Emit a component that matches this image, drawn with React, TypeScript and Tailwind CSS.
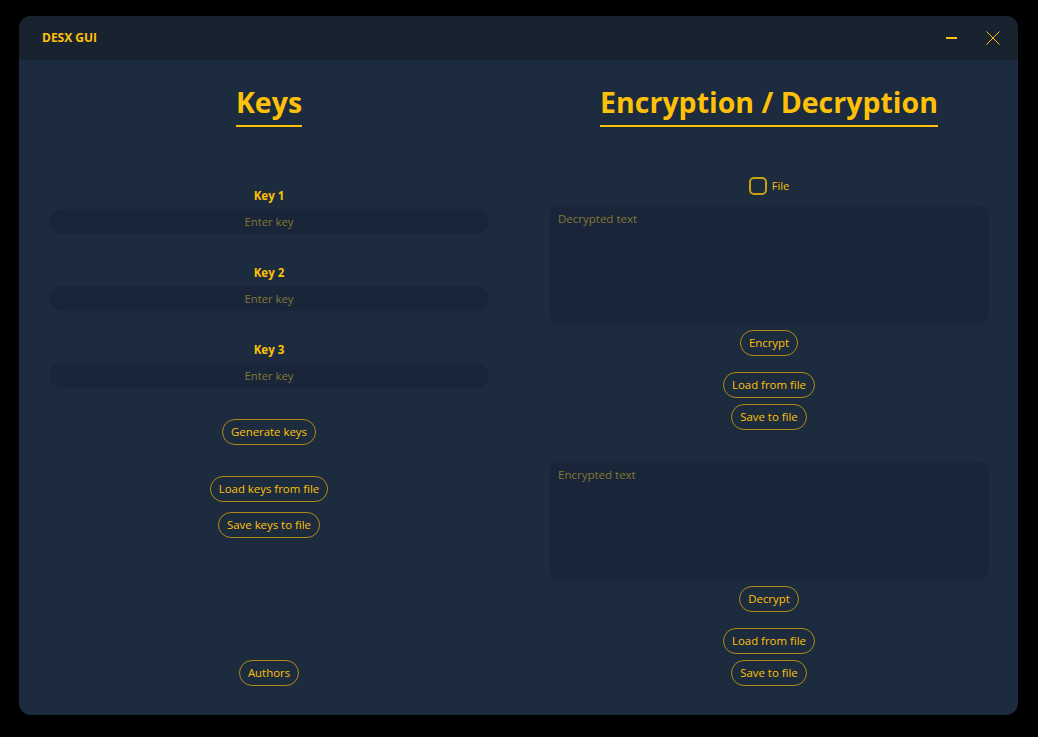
import React from "react";

const Btn = ({ children, className = "" }: { children: React.ReactNode; className?: string }) => (
  <button
    className={`h-[26px] px-[8px] rounded-full border border-[#b08c17] text-[#ffc107] text-[11.4px] leading-none flex items-center justify-center bg-transparent ${className}`}
  >
    {children}
  </button>
);

const KeyField = ({ label, className = "" }: { label: string; className?: string }) => (
  <div className={`w-full flex flex-col items-center ${className}`}>
    <div className="h-[20px] leading-[20px] text-[11.5px] font-bold text-[#ffc107]">{label}</div>
    <input
      className="mt-[3px] w-full h-[25px] rounded-full bg-[#19263a] text-center text-[11.3px] text-[#ffc107] outline-none placeholder:text-[#847832]"
      placeholder="Enter key"
    />
  </div>
);

const Heading = ({ children }: { children: React.ReactNode }) => (
  <div className="mt-[24px] inline-block text-[28.5px] leading-[36px] font-bold text-[#ffc107] pb-[5px] border-b-2 border-[#ffc107]">
    {children}
  </div>
);

const Area = ({ placeholder, className = "" }: { placeholder: string; className?: string }) => (
  <textarea
    className={`w-full h-[120px] rounded-[12px] bg-[#19263a] px-[9px] pt-[6px] pb-[5px] text-[11.5px] leading-[16px] text-[#ffc107] outline-none resize-none placeholder:text-[#847832] ${className}`}
    placeholder={placeholder}
  />
);

export default function App() {
  return (
    <div className="w-[1038px] h-[737px] bg-black pt-[16px] pl-[19px] font-['Open_Sans',sans-serif]">
      <div className="w-[999px] h-[699px] rounded-[12px] overflow-hidden bg-[#1c2b3d] flex flex-col">
        <div className="h-[44px] bg-[#18232f] flex items-center justify-between pl-[23px] pr-[18px] shrink-0">
          <div className="text-[12px] font-bold text-[#ffc107]">DESX GUI</div>
          <div className="flex items-center">
            <div className="w-[11px] h-[1.5px] bg-[#ffc107]" />
            <svg className="ml-[29px]" width="14" height="14" viewBox="0 0 14 14">
              <path d="M0.5 0.5 L13.5 13.5 M13.5 0.5 L0.5 13.5" stroke="#ffc107" strokeWidth="1" fill="none" />
            </svg>
          </div>
        </div>
        <div className="flex-1 grid grid-cols-[440px_440px] gap-x-[60px] pl-[30px] pb-[29px]">
          <div className="flex flex-col items-center">
            <Heading>Keys</Heading>
            <KeyField label="Key 1" className="mt-[59px]" />
            <KeyField label="Key 2" className="mt-[29px]" />
            <KeyField label="Key 3" className="mt-[29px]" />
            <Btn className="mt-[31px]">Generate keys</Btn>
            <Btn className="mt-[31px]">Load keys from file</Btn>
            <Btn className="mt-[10px]">Save keys to file</Btn>
            <Btn className="mt-auto">Authors</Btn>
          </div>
          <div className="flex flex-col items-center">
            <Heading>Encryption / Decryption</Heading>
            <div className="mt-[50px] flex items-center h-[18px]">
              <div className="w-[18px] h-[18px] rounded-[5px] border-2 border-[#c9a212]" />
              <span className="ml-[5px] text-[11px] text-[#ffc107]">File</span>
            </div>
            <Area placeholder="Decrypted text" className="mt-[10px]" />
            <Btn className="mt-[5px]">Encrypt</Btn>
            <Btn className="mt-[16px]">Load from file</Btn>
            <Btn className="mt-[6px]">Save to file</Btn>
            <Area placeholder="Encrypted text" className="mt-[31px]" />
            <Btn className="mt-[5px]">Decrypt</Btn>
            <Btn className="mt-[16px]">Load from file</Btn>
            <Btn className="mt-[6px]">Save to file</Btn>
          </div>
        </div>
      </div>
    </div>
  );
}
